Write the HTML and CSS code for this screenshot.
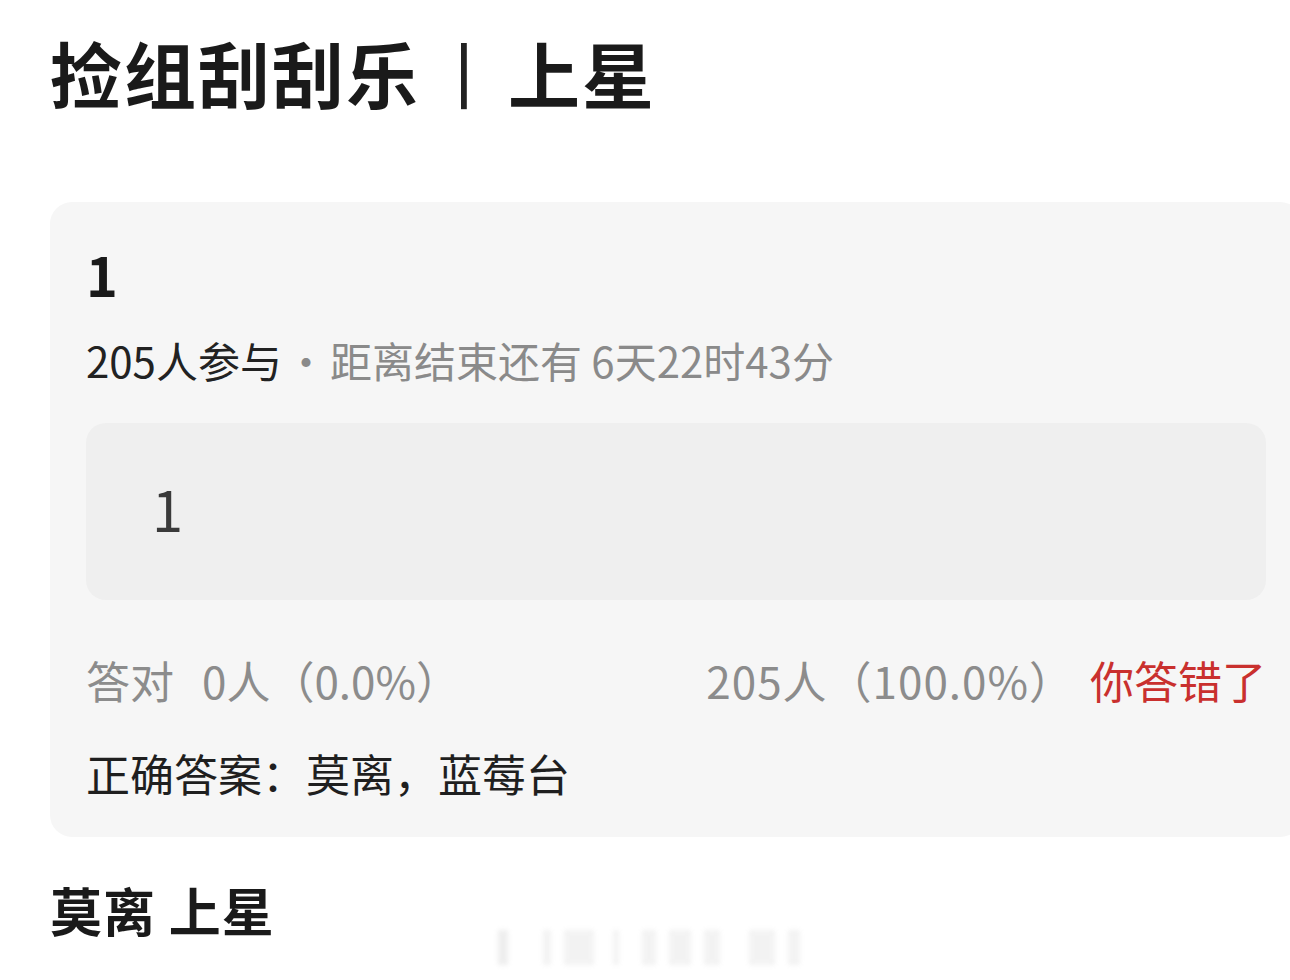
FILE: index.html
```html
<!DOCTYPE html>
<html lang="zh-CN">
<head>
  <meta charset="UTF-8" />
  <title>捡组刮刮乐 丨 上星</title>
  <meta name="viewport" content="width=device-width, initial-scale=1.0" />
  <link rel="stylesheet" href="styles.css">
</head>
<body>
  <div class="page">
    <h1 class="title">捡组刮刮乐<span class="sep">丨</span>上星</h1>

    <div class="card">
      <div class="q-name">1</div>
      <div class="meta">
        <span class="meta-count">205人参与</span><span class="meta-dot">·</span><span class="meta-time">距离结束还有 6天22时43分</span>
      </div>

      <div class="answer-box">
        <span class="answer-text">1</span>
      </div>

      <div class="stats">
        <div class="stats-left">答对<span class="stats-gap"></span>0人（0.0%）</div>
        <div class="stats-right">
          <span class="stats-num">205人（100.0%）</span>
          <span class="wrong">你答错了</span>
        </div>
      </div>

      <div class="correct">正确答案：莫离，蓝莓台</div>
    </div>

    <div class="footer-row">
      <div class="footer-title">莫离 上星</div>
      <div class="stamp">
        <span class="b1"></span><span class="b2"></span><span class="b3"></span>
        <span class="b4"></span><span class="b5"></span><span class="b6"></span>
        <span class="b7"></span><span class="b8"></span><span class="b9"></span>
      </div>
    </div>
  </div>
</body>
</html>
```

FILE: styles.css
```css
html, body {
  margin: 0;
  padding: 0;
  background: #fff;
  overflow: hidden;
}
body {
  font-family: "Noto Sans CJK SC", "Noto Sans", sans-serif;
  color: #1c1c1c;
  width: 1290px;
  height: 980px;
}
.page {
  padding: 29px 0 0 50px;
}
.title {
  margin: 0;
  font-size: 72px;
  line-height: 86px;
  font-weight: 700;
  color: #1a1a1a;
  letter-spacing: 2px;
  white-space: nowrap;
}
.title .sep {
  display: inline-block;
  width: 88px;
  text-align: center;
  font-weight: 400;
  letter-spacing: 0;
  color: #222;
}
.card {
  margin-top: 87px;
  width: 1180px;
  padding: 40px 36px 37px 36px;
  background: #f6f6f6;
  border-radius: 22px;
}
.q-name {
  font-size: 54px;
  line-height: 64px;
  font-weight: 700;
  color: #1a1a1a;
}
.meta {
  margin-top: 29px;
  font-size: 42px;
  line-height: 50px;
  white-space: nowrap;
  display: flex;
}
.meta-count {
  color: #222;
}
.meta-dot {
  width: 48px;
  text-align: center;
  color: #8a8a8a;
}
.meta-time {
  color: #8a8a8a;
}
.answer-box {
  margin-top: 38px;
  height: 177px;
  box-sizing: border-box;
  padding: 0 0 8px 66px;
  background: #efefef;
  border-radius: 20px;
  display: flex;
  align-items: center;
}
.answer-text {
  font-size: 56px;
  line-height: 66px;
  color: #3a3a3a;
}
.stats {
  margin-top: 53px;
  display: flex;
  justify-content: space-between;
  font-size: 44px;
  line-height: 54px;
  color: #8c8c8c;
  white-space: nowrap;
}
.stats-gap {
  display: inline-block;
  width: 28px;
}
.stats-right {
  display: flex;
}
.stats-num {
  letter-spacing: 1px;
}
.wrong {
  margin-left: 16px;
  color: #c9302e;
}
.correct {
  margin-top: 39px;
  font-size: 44px;
  line-height: 54px;
  color: #1f1f1f;
  white-space: nowrap;
}
.footer-row {
  margin-top: 42px;
  display: flex;
  align-items: flex-start;
}
.footer-title {
  font-size: 52px;
  line-height: 62px;
  font-weight: 700;
  color: #1a1a1a;
  letter-spacing: 1px;
}
/* faint blurred stamp under the post */
.stamp {
  margin: 51px 0 0 223px;
  height: 35px;
  display: flex;
  gap: 13px;
  filter: blur(2.5px);
  opacity: 0.25;
}
.stamp span {
  display: block;
  height: 100%;
  background: #cfcfcf;
}
.b1 { width: 10px; background: #bbb !important; }
.b2 { width: 8px; margin-left: 22px; }
.b3 { width: 30px; }
.b4 { width: 6px; margin-left: 6px; }
.b5 { width: 14px; margin-left: 10px; }
.b6 { width: 22px; }
.b7 { width: 16px; }
.b8 { width: 26px; margin-left: 16px; }
.b9 { width: 12px; }
```
